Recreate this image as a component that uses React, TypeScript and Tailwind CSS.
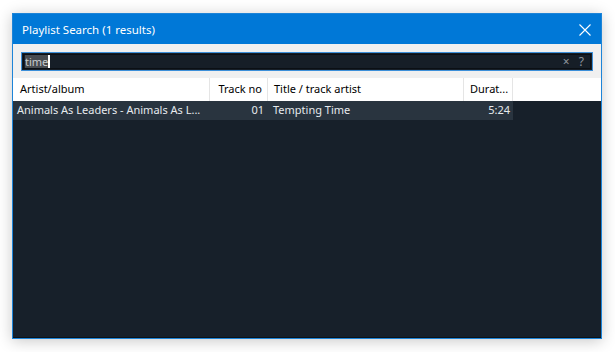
import React from 'react';

const columns = [
  { label: 'Artist/album', width: 'w-[197px]', align: 'pl-[7px]' },
  { label: 'Track no', width: 'w-[58px]', align: 'justify-end pr-[5px]' },
  { label: 'Title / track artist', width: 'w-[196px]', align: 'pl-[6px]' },
  { label: 'Durat...', width: 'w-[49px]', align: 'pl-[6px]' },
];

const rows = [
  {
    artist: 'Animals As Leaders - Animals As L...',
    track: '01',
    title: 'Tempting Time',
    duration: '5:24',
  },
];

const App = () => {
  return (
    <div
      className="w-[615px] h-[352px] bg-white pt-[13px] pl-[12px] overflow-hidden"
      style={{ fontFamily: '"Noto Sans", "Open Sans", sans-serif' }}
    >
      <div className="w-[590px] h-[326px] border border-[#1d84d8] flex flex-col shadow-[0_2px_14px_rgba(0,0,0,0.22)]">
        {/* title bar */}
        <div className="h-[30px] bg-[#0078d7] flex items-center justify-between pl-[9px] pr-[10px] text-white text-[11.5px]">
          <span className="mt-[1px]">Playlist Search (1 results)</span>
          <svg width="12" height="12" viewBox="0 0 12 12" className="mt-[1px]">
            <path d="M0.5 0.5 L11.5 11.5 M11.5 0.5 L0.5 11.5" stroke="#ffffff" strokeWidth="1.1" />
          </svg>
        </div>

        <div className="flex-1 bg-[#f0f0f0] flex flex-col">
          {/* search box */}
          <div className="px-[8px] pt-[8px] pb-[7px]">
            <div className="h-[19px] border border-[#3c8fd9] bg-[#161e27] p-[1px]">
              <div className="h-full border border-[#0b0f14] flex items-center justify-between pl-[1px] pr-[3px] text-[11px] leading-none">
                <div className="flex items-center h-full">
                  <span className="bg-[#474b50] text-[#c9ccce] h-full flex items-center">time</span>
                  <span className="w-[2px] h-full bg-white" />
                </div>
                <span className="text-[#8e959c] text-[12px] tracking-[3px]">× ?</span>
              </div>
            </div>
          </div>

          {/* list */}
          <div className="flex-1 flex flex-col bg-[#17202a] border-b border-[#0c1218]">
            <div className="h-[23px] bg-white flex text-[11px] text-black">
              {columns.map((col, i) => (
                <div
                  key={i}
                  className={`${col.width} ${col.align} h-full flex items-center border-r border-[#e5e5e5]`}
                >
                  {col.label}
                </div>
              ))}
              <div className="flex-1" />
            </div>

            {rows.map((row, i) => (
              <div key={i} className="h-[19px] w-[500px] bg-[#29343f] flex items-center text-[11px] text-[#e6eaed]">
                <div className="w-[197px] pl-[4px] whitespace-nowrap">{row.artist}</div>
                <div className="w-[58px] text-right pr-[4px]">{row.track}</div>
                <div className="w-[196px] pl-[5px]">{row.title}</div>
                <div className="w-[49px] text-right pr-[3px]">{row.duration}</div>
              </div>
            ))}
          </div>
        </div>
      </div>
    </div>
  );
};

export default App;
